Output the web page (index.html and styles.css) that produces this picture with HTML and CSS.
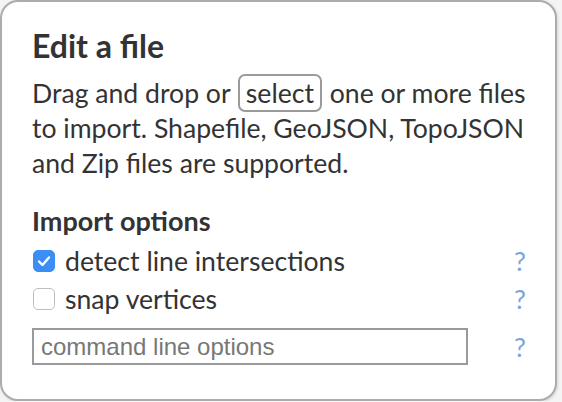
FILE: index.html
```html
<!DOCTYPE html>
<html>
<head>
<meta charset="utf-8">
<link rel="stylesheet" href="styles.css">
</head>
<body>
<div class="panel">
  <h1 class="title">Edit a file</h1>
  <p class="intro">Drag and drop or <span class="select-btn">select</span> one or more files<br>to import. Shapefile, GeoJSON, TopoJSON<br>and Zip files are supported.</p>
  <h2 class="subtitle">Import options</h2>
  <div class="option first">
    <span class="check checked"><svg viewBox="0 0 22 22" width="22" height="22"><path d="M6 11.5 L9.5 15 L16 7.5" fill="none" stroke="#fff" stroke-width="2.4" stroke-linecap="round" stroke-linejoin="round"/></svg></span>
    <span class="label">detect line intersections</span>
    <span class="help">?</span>
  </div>
  <div class="option">
    <span class="check"></span>
    <span class="label">snap vertices</span>
    <span class="help">?</span>
  </div>
  <div class="option cmd">
    <input class="cmd-input" type="text" placeholder="command line options">
    <span class="help">?</span>
  </div>
</div>
</body>
</html>
```
FILE: styles.css
```css
html, body {
  margin: 0;
  padding: 0;
  background: #f4f4f4;
}
.panel {
  box-sizing: border-box;
  width: 557px;
  height: 401px;
  background: #fff;
  border: 2px solid #acacac;
  border-radius: 18px;
  padding: 24px 30px 0 30px;
  font-family: Lato, "Open Sans", sans-serif;
  color: #333;
  box-shadow: 1px 1px 3px rgba(0,0,0,0.12);
}
.title {
  margin: 0;
  font-size: 32px;
  font-weight: 700;
  line-height: 40px;
}
.intro {
  margin: 10px -10px 0 0;
  font-size: 26.6px;
  line-height: 35px;
  white-space: nowrap;
}
.select-btn {
  display: inline-block;
  border: 2px solid #9a9a9a;
  border-radius: 7px;
  padding: 0 6px;
  line-height: 34px;
  margin: -3px 1px;
  vertical-align: 0;
}
.subtitle {
  margin: 23px 0 0 0;
  font-size: 27px;
  font-weight: 700;
  line-height: 34px;
}
.option {
  display: flex;
  align-items: center;
  height: 38px;
  font-size: 26.6px;
}
.option.first {
  margin-top: 4px;
}
.check {
  box-sizing: border-box;
  width: 22px;
  height: 22px;
  border: 1px solid #bdbdbd;
  border-radius: 5px;
  margin: 0 10px 0 1px;
  background: #fff;
  display: flex;
}
.check.checked {
  background: #3a8ef5;
  border-color: #3a8ef5;
}
.check svg { margin: -1px; }
.label { flex: 1; }
.help {
  color: #7fa5d8;
  width: 12px;
  text-align: center;
  margin-right: -1px;
}
.cmd {
  margin-top: 10px;
  height: 37px;
}
.cmd-input {
  box-sizing: border-box;
  width: 436px;
  height: 37px;
  border: 2px solid #9a9a9a;
  margin: 0 auto 0 0;
  padding: 0 7px;
  font-family: "Liberation Sans", Arial, sans-serif;
  font-size: 24px;
  color: #333;
  outline: none;
}
.cmd-input::placeholder { color: #777; }
```
